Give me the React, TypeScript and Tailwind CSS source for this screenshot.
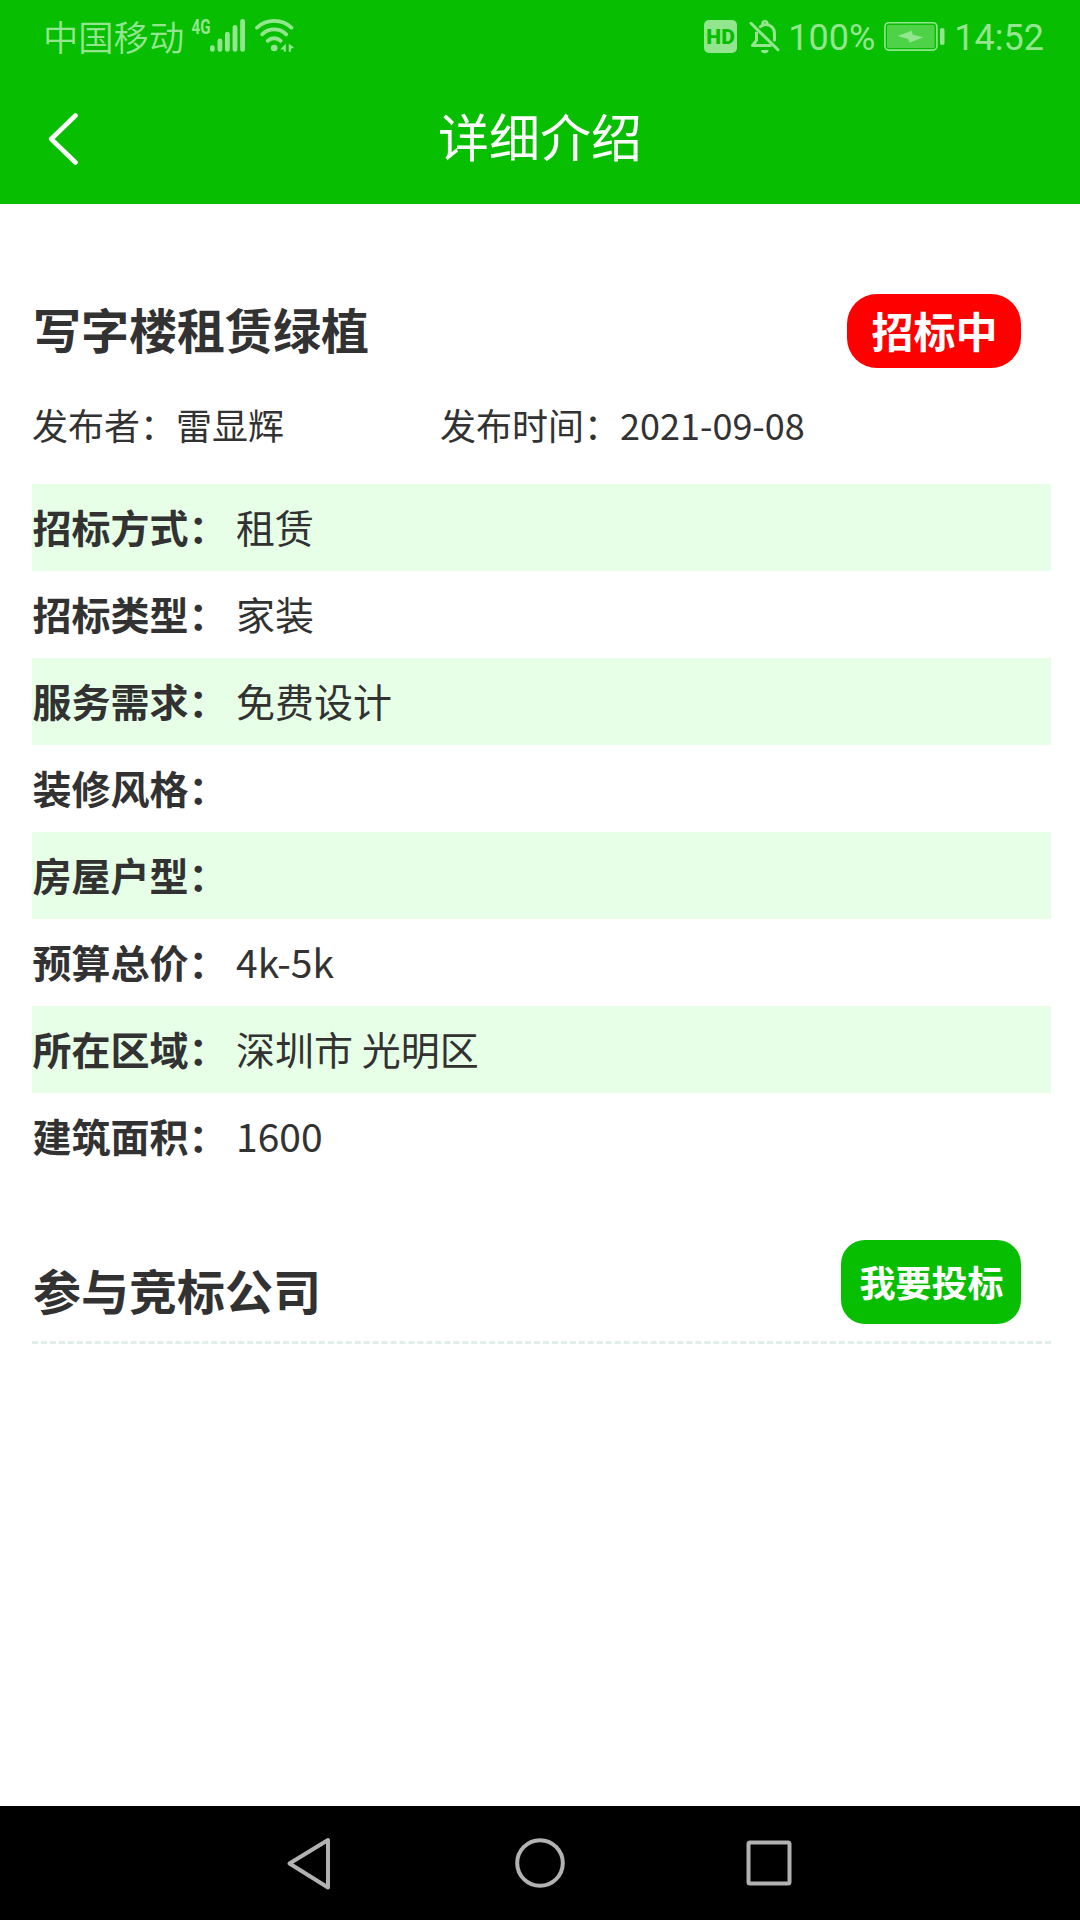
type DetailType = {
  label: string;
  value: string;
};

const details: DetailType[] = [
  { label: "招标方式：", value: "租赁" },
  { label: "招标类型：", value: "家装" },
  { label: "服务需求：", value: "免费设计" },
  { label: "装修风格：", value: "" },
  { label: "房屋户型：", value: "" },
  { label: "预算总价：", value: "4k-5k" },
  { label: "所在区域：", value: "深圳市 光明区" },
  { label: "建筑面积：", value: "1600" },
];

function SignalIcon() {
  return (
    <svg className="ml-[6px] shrink-0" width="56" height="44" viewBox="190 14 56 44">
      <text
        x="191.5"
        y="33.5"
        fontSize="19.5"
        fontWeight="700"
        fontFamily="Roboto, sans-serif"
        textLength="19"
        lengthAdjust="spacingAndGlyphs"
        fill="currentColor"
      >
        4G
      </text>
      <g stroke="currentColor" strokeWidth="4.8" strokeLinecap="round">
        <path d="M212.4 47.7v1.7M219.9 41v8.4M227.4 34.2v15.2M235 27.5v21.9M242.6 21.3v28.1" />
      </g>
    </svg>
  );
}

function WifiIcon() {
  return (
    <svg className="ml-[9px] shrink-0" width="40" height="36" viewBox="255 18 40 36">
      <g fill="none" stroke="currentColor" strokeWidth="3.8" strokeLinecap="round">
        <path d="M257 27.6a25.5 25.5 0 0 1 34.4 0" />
        <path d="M262.2 34.3a17.2 17.2 0 0 1 24 0" />
        <path d="M267.7 40.8a9.6 9.6 0 0 1 13 0" />
      </g>
      <circle cx="274.2" cy="48" r="3.3" fill="currentColor" />
      <path d="M285.8 43.8v8h-2v-2.2h-3.6zM288.8 51.8v-8l5.2 3.6-3.2 1.6v2.8z" fill="currentColor" />
    </svg>
  );
}

function HdIcon() {
  return (
    <svg className="mt-px ml-auto shrink-0" width="33" height="33" viewBox="0 0 33 33">
      <rect width="33" height="33" rx="5" fill="currentColor" />
      <text
        x="2.3"
        y="23.8"
        fontSize="20.7"
        fontWeight="900"
        fontFamily="Roboto, sans-serif"
        textLength="28.5"
        lengthAdjust="spacingAndGlyphs"
        fill="#07bf00"
      >
        HD
      </text>
    </svg>
  );
}

function MutedBellIcon() {
  return (
    <svg className="mt-px ml-[12px] shrink-0" width="32" height="35" viewBox="750 19 32 35">
      <g fill="none" stroke="currentColor" strokeWidth="3" strokeLinecap="round" strokeLinejoin="round">
        <path d="M752 23.3l27 26.5" />
        <path d="M757.5 31.8v8.5l-4 5.2h19" strokeLinecap="butt" />
        <path d="M761.5 26.7c1.5-1.2 2.7-1.7 4-2 5.5-.8 10 3.3 10 8.8v6.5" />
        <path d="M763.5 24c0-3.8 5-3.8 5 0" strokeWidth="2.4" />
      </g>
      <path d="M762 50h7.5a3.75 3.2 0 0 1-7.5 0z" fill="currentColor" />
    </svg>
  );
}

function BatteryIcon() {
  return (
    <svg className="ml-[8px] shrink-0" width="62" height="30" viewBox="883 21 62 30">
      <rect x="884.9" y="22.7" width="52" height="27.4" rx="4" fill="none" stroke="currentColor" strokeWidth="1.6" />
      <rect x="887" y="25" width="47.6" height="22.9" rx="1.5" fill="currentColor" fillOpacity=".5" />
      <path d="M897.7 36l14-5.3 1 4 10.6 2.6-14 5.4-1-3.7z" fill="currentColor" />
      <rect x="940" y="28" width="4.5" height="17" rx="2" fill="currentColor" />
    </svg>
  );
}

function StatusBar() {
  return (
    <div className="flex h-[72px] items-center pl-[43px] pr-[36px] text-[#93e68f]">
      <span className="text-[35.3px] leading-none font-[350]">中国移动</span>
      <SignalIcon />
      <WifiIcon />
      <HdIcon />
      <MutedBellIcon />
      <span className="mt-[3px] ml-[7px] font-[Roboto] text-[36px] leading-none">100%</span>
      <BatteryIcon />
      <span className="mt-[3px] ml-[9px] font-[Roboto] text-[36px] leading-none">14:52</span>
    </div>
  );
}

function Header() {
  return (
    <header className="h-[204px] bg-[#07bf00]">
      <StatusBar />
      <div className="grid h-[132px] grid-cols-[1fr_auto_1fr] items-center text-white">
        <svg className="ml-[47px] mt-px" width="32" height="52" viewBox="0 0 32 52">
          <path
            d="M28.5 2.5L4.2 26l24.3 23.5"
            fill="none"
            stroke="currentColor"
            strokeWidth="4.6"
            strokeLinecap="round"
            strokeLinejoin="round"
          />
        </svg>
        <h1 className="pb-[5px] text-[51px] leading-none">详细介绍</h1>
      </div>
    </header>
  );
}

function NavBar() {
  return (
    <nav className="flex h-[114px] items-center justify-center gap-[172px] bg-black text-[#b2b2b2]">
      <svg width="56" height="60" viewBox="0 0 56 60" fill="none" stroke="currentColor" strokeWidth="4" strokeLinejoin="round">
        <path d="M44 7v47.5L5.5 30.5z" />
      </svg>
      <svg width="56" height="60" viewBox="0 0 56 60" fill="none" stroke="currentColor" strokeWidth="4">
        <circle cx="28" cy="30" r="22.8" />
      </svg>
      <svg width="56" height="60" viewBox="0 0 56 60" fill="none" stroke="currentColor" strokeWidth="4">
        <rect x="8.5" y="9.5" width="41" height="41" rx="1.5" />
      </svg>
    </nav>
  );
}

export default function App() {
  return (
    <div className="flex h-[1920px] w-[1080px] flex-col bg-white font-['Noto_Sans_CJK_SC',sans-serif] text-[#323232]">
      <Header />

      <main className="flex-1 pl-[32px] pr-[29px]">
        <div className="flex items-center justify-between pt-[90px] pr-[30px]">
          <h2 className="pb-[7px] pl-px text-[48px] font-bold leading-none">写字楼租赁绿植</h2>
          <span className="flex h-[74px] w-[174px] items-center justify-center rounded-[30px] bg-[#fe0000] pb-[2px] pl-px text-[42px] font-bold leading-none text-white">
            招标中
          </span>
        </div>

        <div className="mt-[38px] mb-[42px] flex text-[36px] leading-none">
          <p className="w-[408px]">发布者：雷显辉</p>
          <p>发布时间：2021-09-08</p>
        </div>

        <ul className="text-[39px] leading-none">
          {details.map(({ label, value }) => (
            <li key={label} className="flex h-[87px] items-center pb-[2px] odd:bg-[#e7ffe7]">
              <span className="w-[204px] pl-[0.5px] font-bold">{label}</span>
              <span>{value}</span>
            </li>
          ))}
        </ul>

        <div className="mt-[60px] flex h-[104px] justify-between border-b-[3px] border-dashed border-[#e0efe8] pr-[30px]">
          <h2 className="pt-[25px] pl-px text-[48px] font-bold leading-none">参与竞标公司</h2>
          <button className="h-[84px] w-[180px] rounded-[24px] bg-[#07bf00] pb-[2px] pl-px text-[36px] font-bold leading-none text-white">
            我要投标
          </button>
        </div>
      </main>

      <NavBar />
    </div>
  );
}
